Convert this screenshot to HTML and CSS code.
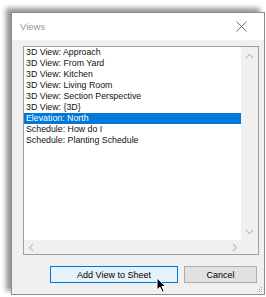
FILE: index.html
```html
<!DOCTYPE html>
<html lang="en">
<head>
    <meta charset="UTF-8">
    <title>Views</title>
    <link rel="stylesheet" href="styles.css">
</head>
<body>
    <div class="dialog">
        <div class="title-bar">
            <span class="title">Views</span>
            <svg class="close" width="11" height="11" viewBox="0 0 11 11">
                <path d="M0.5 0.5 L10.5 10.5 M10.5 0.5 L0.5 10.5" stroke="#6d6d6d" stroke-width="1" fill="none"/>
            </svg>
        </div>
        <div class="dialog-body">
            <div class="listbox">
                <ul class="items">
                    <li>3D View: Approach</li>
                    <li>3D View: From Yard</li>
                    <li>3D View: Kitchen</li>
                    <li>3D View: Living Room</li>
                    <li>3D View: Section Perspective</li>
                    <li>3D View: {3D}</li>
                    <li class="selected">Elevation: North</li>
                    <li>Schedule: How do I</li>
                    <li>Schedule: Planting Schedule</li>
                </ul>
                <div class="vscroll">
                    <svg width="9" height="6" viewBox="0 0 9 6"><path d="M1 5 L4.5 1.5 L8 5" stroke="#c2c2c2" stroke-width="1.2" fill="none"/></svg>
                    <svg width="9" height="6" viewBox="0 0 9 6"><path d="M1 1 L4.5 4.5 L8 1" stroke="#c2c2c2" stroke-width="1.2" fill="none"/></svg>
                </div>
                <div class="hscroll">
                    <svg width="6" height="9" viewBox="0 0 6 9"><path d="M5 1 L1.5 4.5 L5 8" stroke="#c2c2c2" stroke-width="1.2" fill="none"/></svg>
                    <svg width="6" height="9" viewBox="0 0 6 9"><path d="M1 1 L4.5 4.5 L1 8" stroke="#c2c2c2" stroke-width="1.2" fill="none"/></svg>
                </div>
                <div class="corner"></div>
            </div>
            <div class="buttons">
                <button class="btn btn-default">Add View to Sheet</button>
                <button class="btn">Cancel</button>
            </div>
        </div>
        <svg class="grip" width="7" height="7" viewBox="0 0 7 7">
            <rect x="5" y="1" width="1" height="1" fill="#a0a0a0"/>
            <rect x="3" y="3" width="1" height="1" fill="#a0a0a0"/>
            <rect x="5" y="3" width="1" height="1" fill="#a0a0a0"/>
            <rect x="1" y="5" width="1" height="1" fill="#a0a0a0"/>
            <rect x="3" y="5" width="1" height="1" fill="#a0a0a0"/>
            <rect x="5" y="5" width="1" height="1" fill="#a0a0a0"/>
        </svg>
    </div>
    <!-- mouse pointer over the default button -->
    <svg class="cursor" width="11" height="17" viewBox="0 0 11 17">
        <path d="M1 1 L1 13 L4 10.2 L6.3 15.3 L8.2 14.5 L6 9.5 L9.8 9.5 Z" fill="#000" stroke="#fff" stroke-width="1" stroke-linejoin="round"/>
    </svg>
</body>
</html>
```

FILE: styles.css
```css
body, html {
    margin: 0;
    padding: 0;
    background: #fff;
    font-family: "Liberation Sans", Arial, sans-serif;
    font-size: 9px;
}
body {
    padding: 12px 0 0 11px;
    width: 266px;
    height: 297px;
    box-sizing: border-box;
    position: relative;
    overflow: hidden;
}
.dialog {
    position: relative;
    width: 254px;
    height: 283px;
    box-sizing: border-box;
    border: 1px solid #8c8c8c;
    background: #f0f0f0;
    box-shadow: -5px -4px 5px rgba(0, 0, 0, 0.42);
    display: flex;
    flex-direction: column;
}
.title-bar {
    height: 27px;
    background: #fff;
    display: flex;
    align-items: center;
    justify-content: space-between;
    padding: 0 17px 0 8px;
}
.title {
    color: #999;
    font-size: 9.5px;
}
.close {
    display: block;
}
.dialog-body {
    flex: 1;
    padding: 6px 0 0 11px;
}
.listbox {
    width: 236px;
    height: 209px;
    box-sizing: border-box;
    border: 1px solid #a0a0a0;
    background: #fff;
    display: grid;
    grid-template-columns: 1fr 17px;
    grid-template-rows: 1fr 14px;
}
.items {
    list-style: none;
    margin: 0;
    padding: 0;
    overflow: hidden;
}
.items li {
    height: 11px;
    line-height: 11px;
    padding-left: 2px;
    color: #111;
    font-size: 8.8px;
    white-space: nowrap;
}
.items li.selected {
    background: #0078d7;
    color: #fff;
}
.vscroll {
    background: #f0f0f0;
    display: flex;
    flex-direction: column;
    justify-content: space-between;
    align-items: center;
    padding: 6px 0 5px;
}
.hscroll {
    background: #f0f0f0;
    display: flex;
    justify-content: space-between;
    align-items: center;
    padding: 0 3px 0 4px;
}
.vscroll svg, .hscroll svg {
    display: block;
}
.corner {
    background: #f0f0f0;
}
.buttons {
    display: flex;
    gap: 6px;
    margin-top: 11px;
    padding-left: 27px;
}
.btn {
    height: 17px;
    box-sizing: border-box;
    border: 1px solid #adadad;
    background: #e1e1e1;
    font-family: "Liberation Sans", Arial, sans-serif;
    font-size: 9px;
    color: #000;
    padding: 0;
    width: 73px;
}
.btn-default {
    width: 128px;
    border-color: #0078d7;
    background: #e5f1fb;
}
.grip {
    position: absolute;
    right: 1px;
    bottom: 1px;
}
.cursor {
    position: absolute;
    left: 156px;
    top: 277px;
}
```
